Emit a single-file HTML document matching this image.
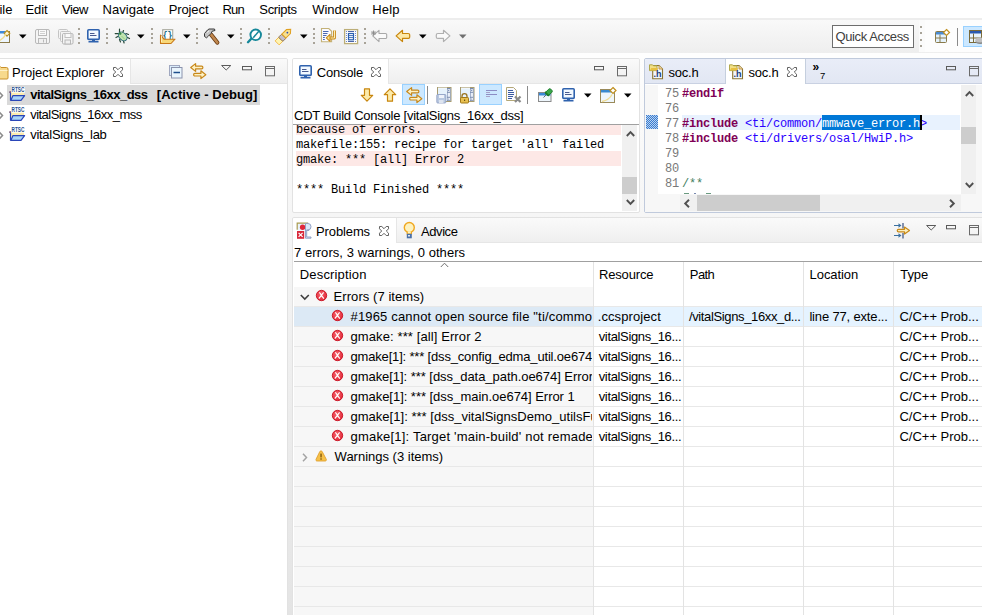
<!DOCTYPE html>
<html><head><meta charset="utf-8">
<style>
*{margin:0;padding:0;box-sizing:border-box}
html,body{width:982px;height:615px;overflow:hidden;background:linear-gradient(#fdfdfd 58px,#e4e4e4 615px)}
body{position:relative;font-family:"Liberation Sans",sans-serif;font-size:13px;color:#000}
.a{position:absolute}
.t{position:absolute;white-space:pre;line-height:13px;font-size:13px}
.m{position:absolute;white-space:pre;font-family:"Liberation Mono",monospace;font-size:12px;letter-spacing:-0.2px;line-height:15px}
svg{position:absolute;overflow:visible}
</style></head><body>
<svg width="0" height="0" style="position:absolute"><defs><radialGradient id="errg" cx="0.45" cy="0.4" r="0.6"><stop offset="0" stop-color="#f86a74"/><stop offset="1" stop-color="#e02636"/></radialGradient></defs></svg>
<div class="a" style="left:0px;top:0px;width:982px;height:19px;background:#fff;"></div>
<div class="t" style="left:-8.5px;top:3px;">File</div>
<div class="t" style="left:25.50px;top:3px;letter-spacing:-0.130px;">Edit</div>
<div class="t" style="left:62.00px;top:3px;letter-spacing:-0.518px;">View</div>
<div class="t" style="left:102.50px;top:3px;letter-spacing:0.060px;">Navigate</div>
<div class="t" style="left:168.70px;top:3px;letter-spacing:-0.108px;">Project</div>
<div class="t" style="left:222.60px;top:3px;letter-spacing:-0.859px;">Run</div>
<div class="t" style="left:259.30px;top:3px;letter-spacing:-0.338px;">Scripts</div>
<div class="t" style="left:312.20px;top:3px;letter-spacing:0.010px;">Window</div>
<div class="t" style="left:372.30px;top:3px;letter-spacing:0.165px;">Help</div>
<div class="a" style="left:0px;top:18px;width:982px;height:35px;background:linear-gradient(#f9f9f9,#eeeeee);border-top:2px solid #ededed"></div>
<div class="a" style="left:0px;top:53px;width:982px;height:5px;background:#fefefe;"></div>
<svg style="left:-6px;top:28px" width="17" height="17" viewBox="0 0 17 17"><rect x="0.5" y="3.5" width="15" height="11" fill="#eef7ff" stroke="#8b7a4a"/><rect x="1" y="3" width="13" height="2.5" fill="#3c8ad8"/><path d="M13 2.5l2.8 2.8-2.8 2.8-2.8-2.8z" fill="#fff6d0" stroke="#b8901e" stroke-width="1.1"/><path d="M1 14c6-1 9-4 11-8" fill="none" stroke="#f0dc90" stroke-width="1.5"/></svg>
<svg style="left:19px;top:34px" width="8" height="5" viewBox="0 0 8 5"><path d="M0 0.5h7.5L3.75 4.5z" fill="#000"/></svg>
<svg style="left:35px;top:29px" width="16" height="16" viewBox="0 0 16 16"><rect x="0.5" y="0.5" width="14" height="14" rx="1.5" fill="#f4f4f4" stroke="#b9b9b9"/><rect x="3.5" y="0.5" width="8" height="6" fill="#fafafa" stroke="#b9b9b9"/><path d="M5 2.5h5M5 4.5h5" stroke="#d0d0d0"/><rect x="3.5" y="9.5" width="8" height="5" fill="#f0f0f0" stroke="#b9b9b9"/><path d="M8.5 10.5v3" stroke="#b9b9b9"/></svg>
<svg style="left:58px;top:29px" width="16" height="16" viewBox="0 0 16 16"><rect x="0.5" y="0.5" width="9" height="9" rx="1" fill="#f4f4f4" stroke="#c4c4c4"/><rect x="2.5" y="2.5" width="10" height="10" rx="1" fill="#f4f4f4" stroke="#c4c4c4"/><rect x="4.5" y="4.5" width="10.5" height="10.5" rx="1.2" fill="#f4f4f4" stroke="#b4b4b4"/><rect x="7" y="4.5" width="6" height="4" fill="#fafafa" stroke="#c0c0c0"/><rect x="7" y="11" width="5.5" height="4" fill="#f0f0f0" stroke="#b8b8b8"/></svg>
<div class="a" style="left:78px;top:28px;width:2px;height:2px;background:#a8a398;"></div>
<div class="a" style="left:78px;top:33px;width:2px;height:2px;background:#a8a398;"></div>
<div class="a" style="left:78px;top:37px;width:2px;height:2px;background:#a8a398;"></div>
<div class="a" style="left:78px;top:42px;width:2px;height:2px;background:#a8a398;"></div>
<svg style="left:87px;top:29px" width="14" height="14" viewBox="0 0 14 14"><rect x="0.8" y="0.8" width="11.4" height="9.6" rx="1" fill="#f2f9ff" stroke="#2f62ae" stroke-width="1.6"/><path d="M3 4.5h4.5M3 6.5h6.5" stroke="#485a8e" stroke-width="1"/><rect x="5" y="10.5" width="3" height="1.6" fill="#2f62ae"/><rect x="1.5" y="12" width="10" height="1.5" fill="#2f62ae"/></svg>
<div class="a" style="left:106px;top:28px;width:2px;height:2px;background:#a8a398;"></div>
<div class="a" style="left:106px;top:33px;width:2px;height:2px;background:#a8a398;"></div>
<div class="a" style="left:106px;top:37px;width:2px;height:2px;background:#a8a398;"></div>
<div class="a" style="left:106px;top:42px;width:2px;height:2px;background:#a8a398;"></div>
<svg style="left:112px;top:26px" width="20" height="20" viewBox="0 0 20 20"><g stroke="#2a4a3a" stroke-width="1.2" fill="none" stroke-linecap="round"><path d="M7.5 3.2v3M11.5 4.5l-0.8 2.3M3.2 7.6h3.3M4 11.5l2.3-1.3M7.5 13.5l1 2.5M11.5 15l0.6 2M14 7.5l2.5 1M15.5 11.5l2 1"/></g><ellipse cx="10.7" cy="10.4" rx="5" ry="3.5" transform="rotate(45 10.7 10.4)" fill="#c0e4b0" stroke="#2a6a78" stroke-width="1"/><circle cx="8.2" cy="7.6" r="1.3" fill="#3a8a4a"/><path d="M9.5 10l3.5 3.5" stroke="#8ac878" stroke-width="0.8"/></svg>
<svg style="left:137px;top:34px" width="8" height="5" viewBox="0 0 8 5"><path d="M0 0.5h7.5L3.75 4.5z" fill="#000"/></svg>
<div class="a" style="left:151px;top:28px;width:2px;height:2px;background:#a8a398;"></div>
<div class="a" style="left:151px;top:33px;width:2px;height:2px;background:#a8a398;"></div>
<div class="a" style="left:151px;top:37px;width:2px;height:2px;background:#a8a398;"></div>
<div class="a" style="left:151px;top:42px;width:2px;height:2px;background:#a8a398;"></div>
<svg style="left:157px;top:26px" width="20" height="20" viewBox="0 0 20 20"><rect x="5.7" y="3.7" width="10" height="10.5" fill="#fff" stroke="#a8a89c" stroke-width="1.1"/><text x="5.8" y="12.6" font-family="Liberation Mono" font-weight="bold" font-size="10.5" fill="#186a84" textLength="9.6" lengthAdjust="spacingAndGlyphs">{}</text><path d="M3.5 9.2v8.3h10.5l4-4.3H7z" fill="#f8d878" stroke="#c87818" stroke-width="1.1" stroke-linejoin="round"/><path d="M4.5 10v6" stroke="#fdeec0" stroke-width="0.9"/></svg>
<svg style="left:183px;top:34px" width="8" height="5" viewBox="0 0 8 5"><path d="M0 0.5h7.5L3.75 4.5z" fill="#000"/></svg>
<div class="a" style="left:196px;top:28px;width:2px;height:2px;background:#a8a398;"></div>
<div class="a" style="left:196px;top:33px;width:2px;height:2px;background:#a8a398;"></div>
<div class="a" style="left:196px;top:37px;width:2px;height:2px;background:#a8a398;"></div>
<div class="a" style="left:196px;top:42px;width:2px;height:2px;background:#a8a398;"></div>
<svg style="left:201px;top:26px" width="20" height="20" viewBox="0 0 20 20"><path d="M10 8.5l6.3 8" stroke="#6a3a10" stroke-width="4.2" stroke-linecap="round"/><path d="M10 8.5l6.3 8" stroke="#c08850" stroke-width="2.6" stroke-linecap="round"/><path d="M3.5 7.5L6.5 4 8 3H13.5L14 4.5 11 5.3 10 7.5 7.5 10 5.5 11.8 3.5 10.5Z" fill="#c4c4c4" stroke="#3a3a3a" stroke-width="1" stroke-linejoin="round"/><path d="M6 6.5l2-1.5" stroke="#f0f0f0" stroke-width="1"/></svg>
<svg style="left:227px;top:34px" width="8" height="5" viewBox="0 0 8 5"><path d="M0 0.5h7.5L3.75 4.5z" fill="#000"/></svg>
<div class="a" style="left:240px;top:28px;width:2px;height:2px;background:#a8a398;"></div>
<div class="a" style="left:240px;top:33px;width:2px;height:2px;background:#a8a398;"></div>
<div class="a" style="left:240px;top:37px;width:2px;height:2px;background:#a8a398;"></div>
<div class="a" style="left:240px;top:42px;width:2px;height:2px;background:#a8a398;"></div>
<svg style="left:244px;top:26px" width="20" height="20" viewBox="0 0 20 20"><circle cx="11.7" cy="8.8" r="5.3" fill="#fff" stroke="#16889a" stroke-width="1.9"/><path d="M7 13L4 16.2" stroke="#16889a" stroke-width="2.4" stroke-linecap="round"/><path d="M9.2 11.8L14.8 5.2" stroke="#16889a" stroke-width="1.5"/></svg>
<div class="a" style="left:268px;top:28px;width:2px;height:2px;background:#a8a398;"></div>
<div class="a" style="left:268px;top:33px;width:2px;height:2px;background:#a8a398;"></div>
<div class="a" style="left:268px;top:37px;width:2px;height:2px;background:#a8a398;"></div>
<div class="a" style="left:268px;top:42px;width:2px;height:2px;background:#a8a398;"></div>
<svg style="left:273px;top:26px" width="20" height="20" viewBox="0 0 20 20"><g transform="translate(11.2 9.8) rotate(-45)"><path d="M-10 -2.8h5v5.6h-5z" fill="#fff4b0" stroke="#f0b030" stroke-width="0.8"/><rect x="-5" y="-3" width="4.5" height="6" rx="1" fill="#c4c0cc" stroke="#8a7048" stroke-width="0.9"/><path d="M-0.5 -2.8h6.5l3.2 2.8-3.2 2.8h-6.5z" fill="#f8e090" stroke="#e0a020" stroke-width="1"/><circle cx="4.5" cy="0" r="0.9" fill="#2a4ab0"/></g></svg>
<svg style="left:300px;top:34px" width="8" height="5" viewBox="0 0 8 5"><path d="M0 0.5h7.5L3.75 4.5z" fill="#000"/></svg>
<div class="a" style="left:313px;top:28px;width:2px;height:2px;background:#a8a398;"></div>
<div class="a" style="left:313px;top:33px;width:2px;height:2px;background:#a8a398;"></div>
<div class="a" style="left:313px;top:37px;width:2px;height:2px;background:#a8a398;"></div>
<div class="a" style="left:313px;top:42px;width:2px;height:2px;background:#a8a398;"></div>
<svg style="left:319px;top:26px" width="20" height="20" viewBox="0 0 20 20"><path d="M2.5 2.5h7.3l2.8 2.8v10.5H2.5z" fill="#fafaff" stroke="#c4b278" stroke-width="1.1"/><path d="M4 5.5h5.5M4 7.5h4.5M4 9.5h3.5M4 11.5h1.8M4 13.5h1.8" stroke="#4a68b0" stroke-width="1.1"/><path d="M15.5 4.5V12H10.5" fill="none" stroke="#c88a18" stroke-width="2.8" stroke-linejoin="round"/><path d="M15.5 4.5V12H10.5" fill="none" stroke="#fdf0b8" stroke-width="1"/><path d="M7.3 11.8L11 8.3v7z" fill="#fbe08a" stroke="#c88a18" stroke-width="1.1" stroke-linejoin="round"/></svg>
<svg style="left:341px;top:26px" width="20" height="20" viewBox="0 0 20 20"><rect x="3.6" y="3.6" width="13" height="14" fill="#fff" stroke="#bcae78" stroke-width="1.3"/><g fill="#5a78c0"><circle cx="5.5" cy="5.5" r="0.6"/><circle cx="5.5" cy="7.5" r="0.6"/><circle cx="5.5" cy="9.5" r="0.6"/><circle cx="5.5" cy="11.5" r="0.6"/><circle cx="5.5" cy="13.5" r="0.6"/><circle cx="5.5" cy="15.5" r="0.6"/><circle cx="14.5" cy="5.5" r="0.6"/><circle cx="14.5" cy="7.5" r="0.6"/><circle cx="14.5" cy="9.5" r="0.6"/><circle cx="14.5" cy="11.5" r="0.6"/><circle cx="14.5" cy="13.5" r="0.6"/><circle cx="14.5" cy="15.5" r="0.6"/></g><path d="M7 5.5h6M7 15.5h6" stroke="#4a64a8" stroke-width="1.1"/><rect x="7.5" y="7.5" width="5" height="6.3" fill="#fff" stroke="#2a60b0" stroke-width="1.2"/><path d="M8 9.6h4M8 11.6h4" stroke="#2a60b0" stroke-width="0.9"/></svg>
<div class="a" style="left:364px;top:28px;width:2px;height:2px;background:#a8a398;"></div>
<div class="a" style="left:364px;top:33px;width:2px;height:2px;background:#a8a398;"></div>
<div class="a" style="left:364px;top:37px;width:2px;height:2px;background:#a8a398;"></div>
<div class="a" style="left:364px;top:42px;width:2px;height:2px;background:#a8a398;"></div>
<svg style="left:368px;top:26px" width="20" height="20" viewBox="0 0 20 20"><path d="M4.7 9.8L11 4.3v3.2h6.5a1.2 1.2 0 0 1 1.2 1.2v2.6a1.2 1.2 0 0 1-1.2 1.2H11v3.1z" fill="#fafafa" stroke="#a8a8a8" stroke-width="1.1" stroke-linejoin="round"/><path d="M5.5 4.5v5M3 7h5M3.7 5.2l3.6 3.6M7.3 5.2L3.7 8.8" stroke="#8a8a8a" stroke-width="0.9"/></svg>
<svg style="left:395px;top:29px" width="16" height="14" viewBox="0 0 16 14"><path d="M1.1 6.9L7.5 1.3V4.5H13.2A1.5 1.5 0 0 1 14.7 6V7.9A1.5 1.5 0 0 1 13.2 9.4H7.5V12.6Z" fill="#fde9a8" stroke="#c8860c" stroke-width="1.2" stroke-linejoin="round"/></svg>
<svg style="left:419px;top:34px" width="8" height="5" viewBox="0 0 8 5"><path d="M0 0.5h7.5L3.75 4.5z" fill="#000"/></svg>
<svg style="left:435px;top:29px" width="16" height="14" viewBox="0 0 16 14"><path d="M14.9 6.9L8.5 1.3V4.5H2.8A1.5 1.5 0 0 0 1.3 6V7.9A1.5 1.5 0 0 0 2.8 9.4H8.5V12.6Z" fill="#fafafa" stroke="#b0b0b0" stroke-width="1.2" stroke-linejoin="round"/></svg>
<svg style="left:459px;top:34px" width="8" height="5" viewBox="0 0 8 5"><path d="M0 0.5h7.5L3.75 4.5z" fill="#707070"/></svg>
<div class="a" style="left:832px;top:25px;width:82px;height:23px;background:#fff;border:1px solid #6e6e6e"></div>
<div class="t" style="left:835.50px;top:30px;letter-spacing:-0.386px;color:#404040">Quick Access</div>
<div class="a" style="left:919px;top:20px;width:63px;height:32px;background:#fbfbfb;"></div>
<div class="a" style="left:925px;top:20px;width:57px;height:32px;background:#fdfdfd;"></div>
<div class="a" style="left:920px;top:26px;width:2px;height:2px;background:#a8a398;"></div>
<div class="a" style="left:920px;top:32px;width:2px;height:2px;background:#a8a398;"></div>
<div class="a" style="left:920px;top:39px;width:2px;height:2px;background:#a8a398;"></div>
<div class="a" style="left:920px;top:45px;width:2px;height:2px;background:#a8a398;"></div>
<svg style="left:935px;top:29px" width="16" height="16" viewBox="0 0 16 16"><rect x="0.5" y="2.5" width="11" height="11" rx="1" fill="#e4f2fc" stroke="#8a7a4a"/><rect x="1" y="3" width="10" height="2.5" fill="#4a8ad0"/><path d="M5 5.5v8M1 9h10" stroke="#8a7a4a"/><path d="M11.5 0.5l3 3-3 3-3-3z" fill="#fff" stroke="#c09020" stroke-width="1.2"/></svg>
<div class="a" style="left:957px;top:28px;width:1px;height:18px;background:#8a8a8a;"></div>
<div class="a" style="left:963px;top:26px;width:24px;height:21px;background:#cce8ff;border:1px solid #99d1ff"></div>
<svg style="left:969px;top:30px" width="16" height="16" viewBox="0 0 16 16"><rect x="0.5" y="0.5" width="12" height="12" fill="#e8f4fc" stroke="#7a6a3a"/><rect x="1" y="1" width="11" height="2.5" fill="#2a5ab0"/><path d="M4.5 3.5v9M1 8h11" stroke="#7a6a3a"/><ellipse cx="11" cy="11" rx="4.5" ry="3" fill="#8a8a8a"/><ellipse cx="11" cy="10" rx="4.5" ry="2.5" fill="#c0c0c0"/></svg>
<div class="a" style="left:-4px;top:58px;width:292px;height:562px;background:#fff;border:1px solid #e2e2e2;border-radius:2px"></div>
<div class="a" style="left:-3px;top:59px;width:290px;height:25px;background:linear-gradient(#fafafa,#efefef);border-radius:2px 2px 0 0;border-bottom:1px solid #e6e6e6"></div>
<div class="a" style="left:-3px;top:59px;width:134px;height:25px;background:#fff;border-right:1px solid #e6e6e6"></div>
<svg style="left:-7px;top:64px" width="16" height="16" viewBox="0 0 16 16"><path d="M1 3.5a2 2 0 0 1 2-2h3l2 2h5.5a1.5 1.5 0 0 1 1.5 1.5v9a1 1 0 0 1-1 1H2a1 1 0 0 1-1-1z" fill="#f7d98c" stroke="#c8902a"/><path d="M1.5 6.5h13" stroke="#fdf0c8"/></svg>
<div class="t" style="left:12.00px;top:66px;letter-spacing:-0.010px;">Project Explorer</div>
<svg style="left:113px;top:67px" width="11" height="11" viewBox="0 0 11 11"><path d="M0.5 0.5h2.3l2.2 2.2 2.2-2.2h2.3v2.3l-2.2 2.2 2.2 2.2v2.3h-2.3l-2.2-2.2-2.2 2.2h-2.3v-2.3l2.2-2.2-2.2-2.2z" fill="none" stroke="#606060" stroke-width="1"/></svg>
<svg style="left:169px;top:65px" width="14" height="14" viewBox="0 0 14 14"><rect x="0.5" y="0.5" width="10" height="10" fill="#d9ecfb" stroke="#a0a8c0"/><rect x="2.5" y="2.5" width="10.5" height="10.5" fill="#e9f5fd" stroke="#8a92ac"/><path d="M4.5 7.5h6.5" stroke="#1c4e8c" stroke-width="1.5"/></svg>
<svg style="left:190px;top:63px" width="17" height="17" viewBox="0 0 17 17"><path d="M0.7 4.5L5.6 0.6V3.2H11.6A1.3 1.3 0 0 1 11.6 5.8H5.6V8.4Z" fill="#fdf1c4" stroke="#c8881a" stroke-width="1.2" stroke-linejoin="round"/><path d="M15.8 11.7L10.9 7.8V10.4H4.9A1.3 1.3 0 0 0 4.9 13H10.9V15.6Z" fill="#fdf1c4" stroke="#c8881a" stroke-width="1.2" stroke-linejoin="round"/></svg>
<svg style="left:221px;top:65px" width="11" height="7" viewBox="0 0 11 7"><path d="M0.6 0.5h9.2L5.2 5z" fill="none" stroke="#5a5a5a" stroke-width="1"/></svg>
<svg style="left:242px;top:66px" width="11" height="5" viewBox="0 0 11 5"><rect x="0.5" y="0.5" width="9" height="3.3" fill="none" stroke="#5a5a5a" stroke-width="1"/></svg>
<svg style="left:265px;top:66px" width="11" height="11" viewBox="0 0 11 11"><rect x="0.5" y="0.5" width="9" height="9.3" fill="none" stroke="#6a6a6a" stroke-width="1"/><path d="M1 2.5h8.5" stroke="#6a6a6a" stroke-width="1"/></svg>
<div class="a" style="left:7px;top:85px;width:253px;height:20px;background:#d9d9d9;"></div>
<div class="t" style="left:156.80px;top:88px;letter-spacing:0.051px;font-weight:bold">[Active - Debug]</div>
<svg style="left:-2px;top:91px" width="6" height="9" viewBox="0 0 6 9"><path d="M1 0.8l3.5 3.7L1 8.2" fill="none" stroke="#8c8c8c" stroke-width="1.5"/></svg>
<svg style="left:9px;top:87px" width="17" height="17" viewBox="0 0 17 17"><rect x="1.5" y="5" width="13.5" height="5.5" fill="#fcecb0"/><path d="M1.5 5v8.5" stroke="#2a46b8" stroke-width="1.2"/><rect x="0.3" y="4.2" width="1.8" height="1.8" fill="#7a5a7a"/><path d="M4 8.6H15.6L12 13.4H1.8z" fill="#a8d4f8" stroke="#2a46b8" stroke-width="1.2" stroke-linejoin="round"/><rect x="2.2" y="0" width="13.8" height="5.6" fill="#fff"/><text x="2.6" y="5.4" font-family="Liberation Sans" font-size="6.9" font-weight="bold" fill="#1d4f90" textLength="12.8" lengthAdjust="spacingAndGlyphs">RTSC</text></svg>
<div class="t" style="left:30.20px;top:88px;letter-spacing:-0.520px;font-weight:bold;">vitalSigns_16xx_dss</div>
<svg style="left:-2px;top:111px" width="6" height="9" viewBox="0 0 6 9"><path d="M1 0.8l3.5 3.7L1 8.2" fill="none" stroke="#8c8c8c" stroke-width="1.5"/></svg>
<svg style="left:9px;top:107px" width="17" height="17" viewBox="0 0 17 17"><rect x="1.5" y="5" width="13.5" height="5.5" fill="#fcecb0"/><path d="M1.5 5v8.5" stroke="#2a46b8" stroke-width="1.2"/><rect x="0.3" y="4.2" width="1.8" height="1.8" fill="#7a5a7a"/><path d="M4 8.6H15.6L12 13.4H1.8z" fill="#a8d4f8" stroke="#2a46b8" stroke-width="1.2" stroke-linejoin="round"/><rect x="2.2" y="0" width="13.8" height="5.6" fill="#fff"/><text x="2.6" y="5.4" font-family="Liberation Sans" font-size="6.9" font-weight="bold" fill="#1d4f90" textLength="12.8" lengthAdjust="spacingAndGlyphs">RTSC</text></svg>
<div class="t" style="left:30.20px;top:108px;letter-spacing:-0.521px;">vitalSigns_16xx_mss</div>
<svg style="left:-2px;top:131px" width="6" height="9" viewBox="0 0 6 9"><path d="M1 0.8l3.5 3.7L1 8.2" fill="none" stroke="#8c8c8c" stroke-width="1.5"/></svg>
<svg style="left:9px;top:127px" width="17" height="17" viewBox="0 0 17 17"><rect x="1.5" y="5" width="13.5" height="5.5" fill="#fcecb0"/><path d="M1.5 5v8.5" stroke="#2a46b8" stroke-width="1.2"/><rect x="0.3" y="4.2" width="1.8" height="1.8" fill="#7a5a7a"/><path d="M4 8.6H15.6L12 13.4H1.8z" fill="#a8d4f8" stroke="#2a46b8" stroke-width="1.2" stroke-linejoin="round"/><rect x="2.2" y="0" width="13.8" height="5.6" fill="#fff"/><text x="2.6" y="5.4" font-family="Liberation Sans" font-size="6.9" font-weight="bold" fill="#1d4f90" textLength="12.8" lengthAdjust="spacingAndGlyphs">RTSC</text></svg>
<div class="t" style="left:30.20px;top:128px;letter-spacing:-0.276px;">vitalSigns_lab</div>
<div class="a" style="left:292px;top:58px;width:348px;height:155px;background:#fff;border:1px solid #e2e2e2;border-radius:2px"></div>
<div class="a" style="left:293px;top:59px;width:346px;height:25px;background:linear-gradient(#fafafa,#efefef);border-radius:2px 2px 0 0;border-bottom:1px solid #e6e6e6"></div>
<div class="a" style="left:293px;top:59px;width:96px;height:25px;background:#fff;border-right:1px solid #e6e6e6;border-radius:2px 0 0 0"></div>
<svg style="left:299px;top:65px" width="14" height="14" viewBox="0 0 14 14"><rect x="0.8" y="0.8" width="11.4" height="9.6" rx="1" fill="#f2f9ff" stroke="#2f62ae" stroke-width="1.6"/><path d="M3 4.5h4.5M3 6.5h6.5" stroke="#485a8e" stroke-width="1"/><rect x="5" y="10.5" width="3" height="1.6" fill="#2f62ae"/><rect x="1.5" y="12" width="10" height="1.5" fill="#2f62ae"/></svg>
<div class="t" style="left:316.80px;top:66px;letter-spacing:-0.211px;">Console</div>
<svg style="left:371px;top:67px" width="11" height="11" viewBox="0 0 11 11"><path d="M0.5 0.5h2.3l2.2 2.2 2.2-2.2h2.3v2.3l-2.2 2.2 2.2 2.2v2.3h-2.3l-2.2-2.2-2.2 2.2h-2.3v-2.3l2.2-2.2-2.2-2.2z" fill="none" stroke="#606060" stroke-width="1"/></svg>
<svg style="left:594px;top:66px" width="11" height="5" viewBox="0 0 11 5"><rect x="0.5" y="0.5" width="9" height="3.3" fill="none" stroke="#5a5a5a" stroke-width="1"/></svg>
<svg style="left:617px;top:66px" width="11" height="11" viewBox="0 0 11 11"><rect x="0.5" y="0.5" width="9" height="9.3" fill="none" stroke="#6a6a6a" stroke-width="1"/><path d="M1 2.5h8.5" stroke="#6a6a6a" stroke-width="1"/></svg>
<svg style="left:361px;top:88px" width="13" height="14" viewBox="0 0 13 14"><path d="M3.5 0.8h5v6.5h3.2L6 13.2 0.3 7.3h3.2z" fill="#fcebab" stroke="#c8860e" stroke-width="1.2" stroke-linejoin="round"/></svg>
<svg style="left:384px;top:88px" width="13" height="14" viewBox="0 0 13 14"><path d="M3.5 13.2h5V6.7h3.2L6 0.8 0.3 6.7h3.2z" fill="#fcebab" stroke="#c8860e" stroke-width="1.2" stroke-linejoin="round"/></svg>
<div class="a" style="left:402px;top:84px;width:23px;height:21px;background:#cce8ff;border:1px solid #99d1ff"></div>
<svg style="left:405.5px;top:87px" width="17" height="17" viewBox="0 0 17 17"><path d="M0.7 4.5L5.6 0.6V3.2H11.6A1.3 1.3 0 0 1 11.6 5.8H5.6V8.4Z" fill="#fdf1c4" stroke="#c8881a" stroke-width="1.2" stroke-linejoin="round"/><path d="M15.8 11.7L10.9 7.8V10.4H4.9A1.3 1.3 0 0 0 4.9 13H10.9V15.6Z" fill="#fdf1c4" stroke="#c8881a" stroke-width="1.2" stroke-linejoin="round"/></svg>
<div class="a" style="left:427px;top:86px;width:1px;height:18px;background:#8a8a8a;"></div>
<svg style="left:436px;top:84px" width="20" height="20" viewBox="0 0 20 20"><rect x="1.5" y="3.5" width="13.5" height="14" fill="#e6f2fc" stroke="#a89c70" stroke-width="1"/><rect x="11" y="4" width="3.5" height="13" fill="#7a8cb0"/><rect x="11.6" y="5.3" width="2.4" height="2.4" fill="#fff"/><circle cx="12.8" cy="6.5" r="0.6" fill="#3a5a9a"/><rect x="11.6" y="8.8" width="2.4" height="4" fill="#e8eef8"/><rect x="11.6" y="13.8" width="2.4" height="2.4" fill="#fff"/><circle cx="12.8" cy="15" r="0.6" fill="#3a5a9a"/><path d="M2 4h9" stroke="#fff" stroke-width="0.8"/><rect x="0.8" y="10.5" width="9" height="8.5" rx="0.8" fill="#b8c8e0" stroke="#8a9ac0" stroke-width="0.8"/><rect x="3" y="11" width="5" height="3" fill="#eef2fa"/><rect x="3" y="16" width="4.5" height="3" fill="#dde4f0"/></svg>
<svg style="left:459px;top:84px" width="20" height="20" viewBox="0 0 20 20"><rect x="1.5" y="3.5" width="13.5" height="14" fill="#e6f2fc" stroke="#a89c70" stroke-width="1"/><rect x="11" y="4" width="3.5" height="13" fill="#7a8cb0"/><rect x="11.6" y="5.3" width="2.4" height="2.4" fill="#fff"/><circle cx="12.8" cy="6.5" r="0.6" fill="#3a5a9a"/><rect x="11.6" y="8.8" width="2.4" height="4" fill="#e8eef8"/><rect x="11.6" y="13.8" width="2.4" height="2.4" fill="#fff"/><circle cx="12.8" cy="15" r="0.6" fill="#3a5a9a"/><path d="M2 4h9" stroke="#fff" stroke-width="0.8"/><path d="M3 14V12.2a2.5 2.5 0 0 1 5 0V14" fill="none" stroke="#9a7420" stroke-width="1.3"/><rect x="1.5" y="13.5" width="8" height="5.5" rx="0.8" fill="#e8c050" stroke="#a07818" stroke-width="1"/><rect x="5" y="15.5" width="1.2" height="1.5" fill="#6a5010"/></svg>
<div class="a" style="left:479px;top:84px;width:23px;height:21px;background:#cce8ff;border:1px solid #99d1ff"></div>
<svg style="left:483px;top:86px" width="18" height="16" viewBox="0 0 18 16"><path d="M3 4.5h11M3 8.5h11" stroke="#8c8cc4" stroke-width="1.1"/><path d="M3 6.5h4M3 10.5h4" stroke="#a8a0c8" stroke-width="1.1"/></svg>
<svg style="left:505px;top:86px" width="18" height="18" viewBox="0 0 18 18"><path d="M1.5 1.5h7l3 3v10H1.5z" fill="#fafaff" stroke="#b4a878" stroke-width="1"/><path d="M3 4.5h5M3 6.5h6M3 8.5h6M3 10.5h5M3 12.5h4" stroke="#3a5aa0" stroke-width="1"/><path d="M10 10.5l5.5 5.5M15.5 10.5L10 16" stroke="#8a8a8a" stroke-width="2.2"/></svg>
<div class="a" style="left:527px;top:86px;width:1px;height:18px;background:#8a8a8a;"></div>
<svg style="left:538px;top:88px" width="16" height="16" viewBox="0 0 16 16"><rect x="0.5" y="4.5" width="12.5" height="9" fill="#eef6fc" stroke="#8a8a8a"/><rect x="1" y="5" width="11.5" height="2.5" fill="#3a8ad8"/><path d="M5.5 9.5l3-3" stroke="#5a6a7a" stroke-width="1"/><g transform="rotate(45 10.5 4.5)"><rect x="8.3" y="0.5" width="4.4" height="7" rx="1.5" fill="#3aa84a" stroke="#1a7a2a" stroke-width="0.9"/><path d="M7.5 6.5h6" stroke="#1a7a2a" stroke-width="1.2"/></g></svg>
<svg style="left:562px;top:88px" width="14" height="14" viewBox="0 0 14 14"><rect x="0.8" y="0.8" width="11.4" height="9.6" rx="1" fill="#f2f9ff" stroke="#2f62ae" stroke-width="1.6"/><path d="M3 4.5h4.5M3 6.5h6.5" stroke="#485a8e" stroke-width="1"/><rect x="5" y="10.5" width="3" height="1.6" fill="#2f62ae"/><rect x="1.5" y="12" width="10" height="1.5" fill="#2f62ae"/></svg>
<svg style="left:584px;top:93px" width="8" height="5" viewBox="0 0 8 5"><path d="M0 0.5h7.5L3.75 4.5z" fill="#000"/></svg>
<svg style="left:600px;top:87px" width="17" height="16" viewBox="0 0 17 16"><rect x="0.5" y="2.5" width="14" height="13" fill="#eef6fc" stroke="#9a8a5a"/><rect x="1" y="3" width="12" height="2.5" fill="#3a8ad0"/><path d="M13 0.5l3 3-3 3-3-3z" fill="#fff" stroke="#c09020" stroke-width="1.2"/><path d="M2 14.5c5-1 8-3 10-7" fill="none" stroke="#f0dc90" stroke-width="1.3"/></svg>
<svg style="left:624px;top:93px" width="8" height="5" viewBox="0 0 8 5"><path d="M0 0.5h7.5L3.75 4.5z" fill="#000"/></svg>
<div class="t" style="left:294.00px;top:109px;letter-spacing:-0.244px;">CDT Build Console [vitalSigns_16xx_dss]</div>
<div class="a" style="left:293px;top:124px;width:346px;height:1px;background:#a0a0a0;"></div>
<div class="a" style="left:296px;top:125px;width:325px;height:10px;background:#fde8e6;"></div>
<div class="a" style="left:296px;top:151px;width:325px;height:15px;background:#fde8e6;"></div>
<div class="a" style="left:293px;top:125px;width:329px;height:87px;overflow:hidden">
<div class="m" style="left:3px;top:-2px;">because of errors.</div>
<div class="m" style="left:3px;top:13px;">makefile:155: recipe for target &#x27;all&#x27; failed</div>
<div class="m" style="left:3px;top:28px;">gmake: *** [all] Error 2</div>
<div class="m" style="left:3px;top:58px;">**** Build Finished ****</div>
</div>
<div class="a" style="left:622px;top:125px;width:15px;height:86px;background:#f0f0f0;"></div>
<div class="a" style="left:622px;top:177px;width:15px;height:17px;background:#cdcdcd;"></div>
<svg style="left:626px;top:131px" width="9" height="6" viewBox="0 0 9 6"><path d="M0.8 5L4.5 1.2 8.2 5" fill="none" stroke="#505050" stroke-width="1.9"/></svg>
<svg style="left:626px;top:199px" width="9" height="6" viewBox="0 0 9 6"><path d="M0.8 1L4.5 4.8 8.2 1" fill="none" stroke="#505050" stroke-width="1.9"/></svg>
<div class="a" style="left:644px;top:58px;width:342px;height:155px;background:#fff;border:1px solid #c0cadc;border-radius:2px"></div>
<div class="a" style="left:645px;top:59px;width:340px;height:25px;background:linear-gradient(#e9edf8,#e2e7f3);border-radius:2px 2px 0 0;border-bottom:1px solid #c9d1e2"></div>
<div class="a" style="left:725px;top:59px;width:81px;height:25px;background:#fff;border-left:1px solid #c5cfde;border-right:1px solid #c5cfde"></div>
<svg style="left:649px;top:64px" width="15" height="16" viewBox="0 0 15 16"><path d="M3.7 1.5h6.3l3.5 3.5v9.8H3.7z" fill="#f2f6fd" stroke="#8b7432" stroke-width="1.1"/><path d="M10 1.5v3.5h3.5" fill="#f0d8a0" stroke="#c09040" stroke-width="0.9"/><path d="M0.5 0.8h3l1 1h3.5v4.8H0.5z" fill="#f2df86" stroke="#a8a040" stroke-width="0.9"/><path d="M0.8 6.6l1.6-2.6h6.2v2.6z" fill="#e8c040"/><text x="4.6" y="13.4" font-family="Liberation Sans" font-weight="bold" font-size="9" fill="#1a3c78">.h</text></svg>
<div class="t" style="left:668.50px;top:66px;letter-spacing:-0.210px;">soc.h</div>
<svg style="left:729px;top:64px" width="15" height="16" viewBox="0 0 15 16"><path d="M3.7 1.5h6.3l3.5 3.5v9.8H3.7z" fill="#f2f6fd" stroke="#8b7432" stroke-width="1.1"/><path d="M10 1.5v3.5h3.5" fill="#f0d8a0" stroke="#c09040" stroke-width="0.9"/><path d="M0.5 0.8h3l1 1h3.5v4.8H0.5z" fill="#f2df86" stroke="#a8a040" stroke-width="0.9"/><path d="M0.8 6.6l1.6-2.6h6.2v2.6z" fill="#e8c040"/><text x="4.6" y="13.4" font-family="Liberation Sans" font-weight="bold" font-size="9" fill="#1a3c78">.h</text></svg>
<div class="t" style="left:748.50px;top:66px;letter-spacing:-0.210px;">soc.h</div>
<svg style="left:787px;top:67px" width="11" height="11" viewBox="0 0 11 11"><path d="M0.5 0.5h2.3l2.2 2.2 2.2-2.2h2.3v2.3l-2.2 2.2 2.2 2.2v2.3h-2.3l-2.2-2.2-2.2 2.2h-2.3v-2.3l2.2-2.2-2.2-2.2z" fill="none" stroke="#606060" stroke-width="1"/></svg>
<div class="t" style="left:812.5px;top:62px;font-size:12px;font-weight:bold;line-height:11px;color:#000">»</div>
<div class="t" style="left:820px;top:71px;font-size:9.5px;line-height:10px">7</div>
<svg style="left:946px;top:66px" width="11" height="5" viewBox="0 0 11 5"><rect x="0.5" y="0.5" width="9" height="3.3" fill="none" stroke="#5a5a5a" stroke-width="1"/></svg>
<svg style="left:969px;top:66px" width="11" height="11" viewBox="0 0 11 11"><rect x="0.5" y="0.5" width="9" height="9.3" fill="none" stroke="#6a6a6a" stroke-width="1"/><path d="M1 2.5h8.5" stroke="#6a6a6a" stroke-width="1"/></svg>
<div class="a" style="left:645px;top:85px;width:13px;height:127px;background:#f7f7f7;"></div>
<div class="a" style="left:682px;top:115px;width:278px;height:15px;background:#e8f2fe;"></div>
<div class="a" style="left:822px;top:115px;width:98px;height:15px;background:#0078d7;"></div>
<svg style="left:646px;top:115px" width="12" height="14" viewBox="0 0 12 14"><defs><pattern id="chk" width="2" height="2" patternUnits="userSpaceOnUse"><rect width="2" height="2" fill="#b8d4f0"/><rect width="1" height="1" fill="#3a7ad0"/><rect x="1" y="1" width="1" height="1" fill="#3a7ad0"/></pattern></defs><rect width="12" height="14" fill="url(#chk)"/></svg>
<div class="a" style="left:645px;top:194px;width:340px;height:18px;background:#f7f7f7;"></div>
<div class="a" style="left:645px;top:85px;width:316px;height:109px;overflow:hidden"><div class="a" style="left:0;top:2px;width:316px;height:120px">
<div class="m" style="left:20px;top:0px;color:#787878">75</div>
<div class="m" style="left:20px;top:15px;color:#787878">76</div>
<div class="m" style="left:20px;top:30px;color:#787878">77</div>
<div class="m" style="left:20px;top:45px;color:#787878">78</div>
<div class="m" style="left:20px;top:60px;color:#787878">79</div>
<div class="m" style="left:20px;top:75px;color:#787878">80</div>
<div class="m" style="left:20px;top:90px;color:#787878">81</div>
<div class="m" style="left:37px;top:0px;color:#7f0055;font-weight:bold">#endif</div>
<div class="m" style="left:37px;top:30px"><b style="color:#7f0055">#include</b> <span style="color:#2a00ff">&lt;ti/common/</span><span style="color:#fff">mmwave_error.h</span><span style="color:#2a00ff">&gt;</span></div>
<div class="m" style="left:37px;top:45px"><b style="color:#7f0055">#include</b> <span style="color:#2a00ff">&lt;ti/drivers/osal/HwiP.h&gt;</span></div>
<div class="m" style="left:37px;top:90px;color:#3f7f5f">/**</div>
</div></div>
<div class="a" style="left:920px;top:115px;width:2px;height:15px;background:#000;"></div>
<div class="a" style="left:684px;top:193px;width:5px;height:1px;background:#6a9a80;"></div>
<div class="a" style="left:694px;top:193px;width:2px;height:1px;background:#7a8ab0;"></div>
<div class="a" style="left:706px;top:193px;width:5px;height:1px;background:#6a9a80;"></div>
<div class="a" style="left:976px;top:85px;width:9px;height:127px;background:#f7f7f7;"></div>
<div class="a" style="left:961px;top:85px;width:15px;height:109px;background:#f0f0f0;"></div>
<div class="a" style="left:961px;top:127px;width:15px;height:17px;background:#cdcdcd;"></div>
<svg style="left:965px;top:91px" width="9" height="6" viewBox="0 0 9 6"><path d="M0.8 5L4.5 1.2 8.2 5" fill="none" stroke="#505050" stroke-width="1.9"/></svg>
<svg style="left:965px;top:182px" width="9" height="6" viewBox="0 0 9 6"><path d="M0.8 1L4.5 4.8 8.2 1" fill="none" stroke="#505050" stroke-width="1.9"/></svg>
<div class="a" style="left:680px;top:195px;width:281px;height:16px;background:#f0f0f0;"></div>
<div class="a" style="left:697px;top:195px;width:123px;height:16px;background:#cdcdcd;"></div>
<svg style="left:684px;top:199px" width="6" height="9" viewBox="0 0 6 9"><path d="M5 0.8L1.2 4.5 5 8.2" fill="none" stroke="#505050" stroke-width="1.9"/></svg>
<svg style="left:949px;top:199px" width="6" height="9" viewBox="0 0 6 9"><path d="M1 0.8L4.8 4.5 1 8.2" fill="none" stroke="#505050" stroke-width="1.9"/></svg>
<div class="a" style="left:292px;top:217px;width:694px;height:402px;background:#fff;border:1px solid #e2e2e2;border-radius:2px"></div>
<div class="a" style="left:293px;top:218px;width:692px;height:25px;background:linear-gradient(#fafafa,#efefef);border-radius:2px 2px 0 0;border-bottom:1px solid #e6e6e6"></div>
<div class="a" style="left:293px;top:218px;width:104px;height:25px;background:#fff;border-right:1px solid #e6e6e6;border-radius:2px 0 0 0"></div>
<svg style="left:294px;top:220px" width="20" height="20" viewBox="0 0 20 20"><rect x="3.5" y="3.5" width="9" height="7" fill="#e8f2fc"/><path d="M3.2 9.8V3.2h11" fill="none" stroke="#a89a50" stroke-width="1.2"/><circle cx="8.6" cy="7.3" r="2.7" fill="#e0283a"/><path d="M11.5 3.5h2.5a3 3.2 0 0 1 0 6.4h-1.3V17h4.3v1.2h-5.5z" fill="#dce8f8" stroke="#8a9ac0" stroke-width="0.9" stroke-linejoin="round"/><path d="M12.7 10.5h2.5" stroke="#8a9ac0" stroke-width="0.9"/><rect x="3" y="11" width="7.2" height="7.8" fill="#d8283a"/><path d="M4.6 12.9l4 4M8.6 12.9l-4 4" stroke="#fff" stroke-width="1.2"/></svg>
<div class="t" style="left:316.00px;top:225px;letter-spacing:-0.115px;">Problems</div>
<svg style="left:379px;top:226px" width="11" height="11" viewBox="0 0 11 11"><path d="M0.5 0.5h2.3l2.2 2.2 2.2-2.2h2.3v2.3l-2.2 2.2 2.2 2.2v2.3h-2.3l-2.2-2.2-2.2 2.2h-2.3v-2.3l2.2-2.2-2.2-2.2z" fill="none" stroke="#606060" stroke-width="1"/></svg>
<svg style="left:403px;top:221px" width="13" height="18" viewBox="0 0 13 18"><circle cx="6.3" cy="6.5" r="5" fill="#fdf2c0" stroke="#f0a820" stroke-width="1.4"/><path d="M4.2 10.5v2.5h4.2v-2.5" fill="#fdf2c0" stroke="#f0a820" stroke-width="1.2"/><rect x="3.8" y="12.8" width="5" height="4.5" fill="#4a70a8"/><rect x="5" y="14" width="2" height="1.5" fill="#e0e8f0"/></svg>
<div class="t" style="left:421.00px;top:225px;letter-spacing:-0.418px;">Advice</div>
<svg style="left:893px;top:221px" width="20" height="18" viewBox="0 0 20 18"><path d="M1 4.5h5.5M1 14.5h5.5" stroke="#3a70a0" stroke-width="1.2"/><path d="M5.5 2.3l3 2.2-3 2.2zM5.5 12.3l3 2.2-3 2.2z" fill="#3a70a0"/><path d="M10 2v5.5M10 12v5.5" stroke="#3a5080" stroke-width="1.2"/><path d="M5 8.3h6.5V6l5 3.5-5 3.5v-2.2H5.5a1.2 1.2 0 0 1 0-2.5z" fill="#fdf0c0" stroke="#c88a18" stroke-width="1.2" stroke-linejoin="round"/></svg>
<svg style="left:926px;top:225px" width="11" height="7" viewBox="0 0 11 7"><path d="M0.6 0.5h9.2L5.2 5z" fill="none" stroke="#5a5a5a" stroke-width="1"/></svg>
<svg style="left:946px;top:225px" width="11" height="5" viewBox="0 0 11 5"><rect x="0.5" y="0.5" width="9" height="3.3" fill="none" stroke="#5a5a5a" stroke-width="1"/></svg>
<svg style="left:969px;top:225px" width="11" height="11" viewBox="0 0 11 11"><rect x="0.5" y="0.5" width="9" height="9.3" fill="none" stroke="#6a6a6a" stroke-width="1"/><path d="M1 2.5h8.5" stroke="#6a6a6a" stroke-width="1"/></svg>
<div class="t" style="left:294.00px;top:246px;letter-spacing:0.070px;">7 errors, 3 warnings, 0 others</div>
<div class="a" style="left:294px;top:261px;width:692px;height:1px;background:#a0a0a0;"></div>
<div class="a" style="left:294px;top:287px;width:299px;height:330px;background:#f7f7f7;"></div>
<div class="a" style="left:294px;top:307px;width:692px;height:19px;background:#e5f3ff;"></div>
<div class="a" style="left:294px;top:307px;width:299px;height:19px;background:#dce9f5;"></div>
<div class="a" style="left:294px;top:306px;width:692px;height:1px;background:#e8e8e8;"></div>
<div class="a" style="left:294px;top:326px;width:692px;height:1px;background:#e8e8e8;"></div>
<div class="a" style="left:294px;top:346px;width:692px;height:1px;background:#e8e8e8;"></div>
<div class="a" style="left:294px;top:366px;width:692px;height:1px;background:#e8e8e8;"></div>
<div class="a" style="left:294px;top:386px;width:692px;height:1px;background:#e8e8e8;"></div>
<div class="a" style="left:294px;top:406px;width:692px;height:1px;background:#e8e8e8;"></div>
<div class="a" style="left:294px;top:426px;width:692px;height:1px;background:#e8e8e8;"></div>
<div class="a" style="left:294px;top:446px;width:692px;height:1px;background:#e8e8e8;"></div>
<div class="a" style="left:294px;top:466px;width:692px;height:1px;background:#e8e8e8;"></div>
<div class="a" style="left:294px;top:486px;width:692px;height:1px;background:#e8e8e8;"></div>
<div class="a" style="left:294px;top:506px;width:692px;height:1px;background:#e8e8e8;"></div>
<div class="a" style="left:294px;top:526px;width:692px;height:1px;background:#e8e8e8;"></div>
<div class="a" style="left:294px;top:546px;width:692px;height:1px;background:#e8e8e8;"></div>
<div class="a" style="left:294px;top:566px;width:692px;height:1px;background:#e8e8e8;"></div>
<div class="a" style="left:294px;top:586px;width:692px;height:1px;background:#e8e8e8;"></div>
<div class="a" style="left:294px;top:606px;width:692px;height:1px;background:#e8e8e8;"></div>
<div class="a" style="left:593px;top:262px;width:1px;height:355px;background:#e3e3e3;"></div>
<div class="a" style="left:683px;top:262px;width:1px;height:355px;background:#e3e3e3;"></div>
<div class="a" style="left:803px;top:262px;width:1px;height:355px;background:#e3e3e3;"></div>
<div class="a" style="left:893px;top:262px;width:1px;height:355px;background:#e3e3e3;"></div>
<div class="t" style="left:299.80px;top:268px;letter-spacing:0.160px;">Description</div>
<svg style="left:440px;top:262px" width="10" height="6" viewBox="0 0 10 6"><path d="M0.8 5L4.5 1.2 8.2 5" fill="none" stroke="#707070" stroke-width="1"/></svg>
<div class="t" style="left:598.90px;top:268px;letter-spacing:-0.144px;">Resource</div>
<div class="t" style="left:689.80px;top:268px;letter-spacing:-0.571px;">Path</div>
<div class="t" style="left:809.60px;top:268px;letter-spacing:-0.074px;">Location</div>
<div class="t" style="left:900.30px;top:268px;letter-spacing:-0.085px;">Type</div>
<svg style="left:300px;top:294px" width="10" height="7" viewBox="0 0 10 7"><path d="M0.8 1l4 4 4-4" fill="none" stroke="#404040" stroke-width="1.6"/></svg>
<svg style="left:316px;top:290px" width="12" height="12" viewBox="0 0 12 12"><circle cx="5.5" cy="5.5" r="5.2" fill="url(#errg)" stroke="#c81424" stroke-width="0.9"/><path d="M3.3 2.4C4.6 3.6 5.6 5.8 7.9 8.7M7.6 2.3C6.1 4 5 6.4 2.8 8.5" fill="none" stroke="#fff" stroke-width="1.1"/></svg>
<div class="t" style="left:333.60px;top:290px;letter-spacing:0.065px;">Errors (7 items)</div>
<svg style="left:332px;top:310px" width="12" height="12" viewBox="0 0 12 12"><circle cx="5.5" cy="5.5" r="5.2" fill="url(#errg)" stroke="#c81424" stroke-width="0.9"/><path d="M3.3 2.4C4.6 3.6 5.6 5.8 7.9 8.7M7.6 2.3C6.1 4 5 6.4 2.8 8.5" fill="none" stroke="#fff" stroke-width="1.1"/></svg>
<div class="a" style="left:294px;top:307px;width:298px;height:19px;overflow:hidden">
<div class="t" style="left:56.50px;top:3px;letter-spacing:0.168px;">#1965 cannot open source file &quot;ti/commo</div>
</div>
<div class="t" style="left:597.70px;top:310px;letter-spacing:0.098px;">.ccsproject</div>
<div class="t" style="left:688.90px;top:310px;letter-spacing:-0.361px;">/vitalSigns_16xx_d...</div>
<div class="t" style="left:809.40px;top:310px;letter-spacing:-0.162px;">line 77, exte...</div>
<div class="t" style="left:899.50px;top:310px;letter-spacing:-0.014px;">C/C++ Prob...</div>
<svg style="left:332px;top:330px" width="12" height="12" viewBox="0 0 12 12"><circle cx="5.5" cy="5.5" r="5.2" fill="url(#errg)" stroke="#c81424" stroke-width="0.9"/><path d="M3.3 2.4C4.6 3.6 5.6 5.8 7.9 8.7M7.6 2.3C6.1 4 5 6.4 2.8 8.5" fill="none" stroke="#fff" stroke-width="1.1"/></svg>
<div class="a" style="left:294px;top:327px;width:298px;height:19px;overflow:hidden">
<div class="t" style="left:56.50px;top:3px;letter-spacing:0.105px;">gmake: *** [all] Error 2</div>
</div>
<div class="t" style="left:598.70px;top:330px;letter-spacing:-0.350px;">vitalSigns_16...</div>
<div class="t" style="left:899.50px;top:330px;letter-spacing:-0.014px;">C/C++ Prob...</div>
<svg style="left:332px;top:350px" width="12" height="12" viewBox="0 0 12 12"><circle cx="5.5" cy="5.5" r="5.2" fill="url(#errg)" stroke="#c81424" stroke-width="0.9"/><path d="M3.3 2.4C4.6 3.6 5.6 5.8 7.9 8.7M7.6 2.3C6.1 4 5 6.4 2.8 8.5" fill="none" stroke="#fff" stroke-width="1.1"/></svg>
<div class="a" style="left:294px;top:347px;width:298px;height:19px;overflow:hidden">
<div class="t" style="left:56.50px;top:3px;letter-spacing:-0.172px;">gmake[1]: *** [dss_config_edma_util.oe674</div>
</div>
<div class="t" style="left:598.70px;top:350px;letter-spacing:-0.350px;">vitalSigns_16...</div>
<div class="t" style="left:899.50px;top:350px;letter-spacing:-0.014px;">C/C++ Prob...</div>
<svg style="left:332px;top:370px" width="12" height="12" viewBox="0 0 12 12"><circle cx="5.5" cy="5.5" r="5.2" fill="url(#errg)" stroke="#c81424" stroke-width="0.9"/><path d="M3.3 2.4C4.6 3.6 5.6 5.8 7.9 8.7M7.6 2.3C6.1 4 5 6.4 2.8 8.5" fill="none" stroke="#fff" stroke-width="1.1"/></svg>
<div class="a" style="left:294px;top:367px;width:298px;height:19px;overflow:hidden">
<div class="t" style="left:56.50px;top:3px;letter-spacing:-0.044px;">gmake[1]: *** [dss_data_path.oe674] Error</div>
</div>
<div class="t" style="left:598.70px;top:370px;letter-spacing:-0.350px;">vitalSigns_16...</div>
<div class="t" style="left:899.50px;top:370px;letter-spacing:-0.014px;">C/C++ Prob...</div>
<svg style="left:332px;top:390px" width="12" height="12" viewBox="0 0 12 12"><circle cx="5.5" cy="5.5" r="5.2" fill="url(#errg)" stroke="#c81424" stroke-width="0.9"/><path d="M3.3 2.4C4.6 3.6 5.6 5.8 7.9 8.7M7.6 2.3C6.1 4 5 6.4 2.8 8.5" fill="none" stroke="#fff" stroke-width="1.1"/></svg>
<div class="a" style="left:294px;top:387px;width:298px;height:19px;overflow:hidden">
<div class="t" style="left:56.50px;top:3px;letter-spacing:-0.033px;">gmake[1]: *** [dss_main.oe674] Error 1</div>
</div>
<div class="t" style="left:598.70px;top:390px;letter-spacing:-0.350px;">vitalSigns_16...</div>
<div class="t" style="left:899.50px;top:390px;letter-spacing:-0.014px;">C/C++ Prob...</div>
<svg style="left:332px;top:410px" width="12" height="12" viewBox="0 0 12 12"><circle cx="5.5" cy="5.5" r="5.2" fill="url(#errg)" stroke="#c81424" stroke-width="0.9"/><path d="M3.3 2.4C4.6 3.6 5.6 5.8 7.9 8.7M7.6 2.3C6.1 4 5 6.4 2.8 8.5" fill="none" stroke="#fff" stroke-width="1.1"/></svg>
<div class="a" style="left:294px;top:407px;width:298px;height:19px;overflow:hidden">
<div class="t" style="left:56.50px;top:3px;letter-spacing:0.020px;">gmake[1]: *** [dss_vitalSignsDemo_utilsFun</div>
</div>
<div class="t" style="left:598.70px;top:410px;letter-spacing:-0.350px;">vitalSigns_16...</div>
<div class="t" style="left:899.50px;top:410px;letter-spacing:-0.014px;">C/C++ Prob...</div>
<svg style="left:332px;top:430px" width="12" height="12" viewBox="0 0 12 12"><circle cx="5.5" cy="5.5" r="5.2" fill="url(#errg)" stroke="#c81424" stroke-width="0.9"/><path d="M3.3 2.4C4.6 3.6 5.6 5.8 7.9 8.7M7.6 2.3C6.1 4 5 6.4 2.8 8.5" fill="none" stroke="#fff" stroke-width="1.1"/></svg>
<div class="a" style="left:294px;top:427px;width:298px;height:19px;overflow:hidden">
<div class="t" style="left:56.50px;top:3px;letter-spacing:0.200px;">gmake[1]: Target &#x27;main-build&#x27; not remade</div>
</div>
<div class="t" style="left:598.70px;top:430px;letter-spacing:-0.350px;">vitalSigns_16...</div>
<div class="t" style="left:899.50px;top:430px;letter-spacing:-0.014px;">C/C++ Prob...</div>
<svg style="left:301.5px;top:452.5px" width="6" height="9" viewBox="0 0 6 9"><path d="M1 0.8l3.5 3.7L1 8.2" fill="none" stroke="#a4a4a4" stroke-width="1.5"/></svg>
<svg style="left:316px;top:450px" width="12" height="12" viewBox="0 0 12 12"><path d="M5 0.8C5.6 0.8 6 1.3 6.4 2L10.2 9.2C10.7 10.2 10.2 11 9 11H1.2C0 11-0.4 10.2 0.1 9.2L3.6 2C4 1.3 4.4 0.8 5 0.8z" fill="#f6c048" stroke="#e0a030" stroke-width="0.9"/><rect x="4.3" y="3.6" width="1.5" height="3.8" fill="#8a6010"/><rect x="4.3" y="8.3" width="1.5" height="1.4" fill="#8a6010"/></svg>
<div class="t" style="left:334.60px;top:450px;letter-spacing:-0.004px;">Warnings (3 items)</div>
</body></html>
